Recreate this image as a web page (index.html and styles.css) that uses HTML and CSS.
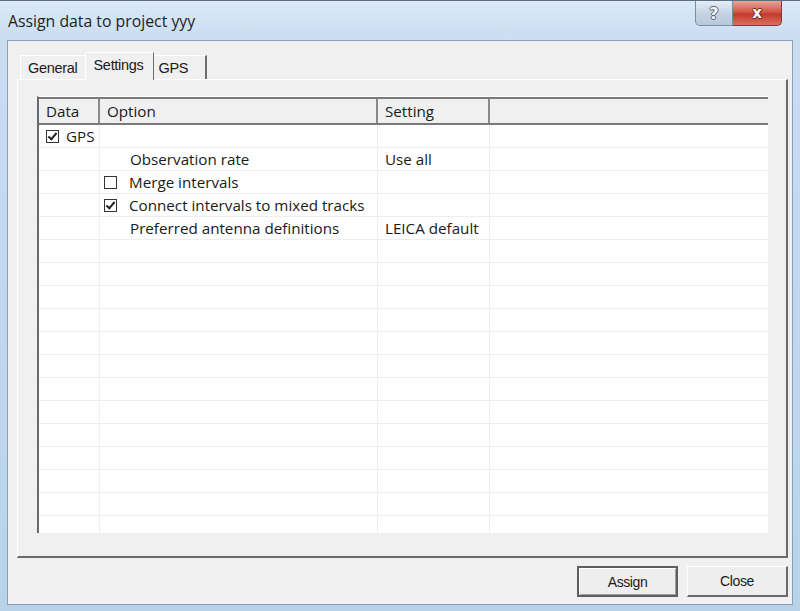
FILE: index.html
```html
<!DOCTYPE html>
<html>
<head>
<meta charset="utf-8">
<link rel="stylesheet" href="styles.css">
</head>
<body>
<div class="window">
  <div class="titlebar">
    <div class="title">Assign data to project yyy</div>
    <div class="caption-buttons">
      <div class="cap-btn help">?</div>
      <div class="cap-btn close">x</div>
    </div>
  </div>
  <div class="client">
    <div class="tabs">
      <div class="tab">General</div>
      <div class="tab active">Settings</div>
      <div class="tab last">GPS</div>
    </div>
    <div class="panel">
      <div class="grid">
        <div class="row head">
          <div class="c c1">Data</div>
          <div class="c c2">Option</div>
          <div class="c c3">Setting</div>
          <div class="c c4"></div>
        </div>
        <div class="row">
          <div class="c c1"><span class="cb checked"></span>GPS</div>
          <div class="c c2"></div>
          <div class="c c3"></div>
          <div class="c c4"></div>
        </div>
        <div class="row">
          <div class="c c1"></div>
          <div class="c c2 ind">Observation rate</div>
          <div class="c c3">Use all</div>
          <div class="c c4"></div>
        </div>
        <div class="row">
          <div class="c c1"></div>
          <div class="c c2"><span class="cb"></span>Merge intervals</div>
          <div class="c c3"></div>
          <div class="c c4"></div>
        </div>
        <div class="row">
          <div class="c c1"></div>
          <div class="c c2"><span class="cb checked"></span>Connect intervals to mixed tracks</div>
          <div class="c c3"></div>
          <div class="c c4"></div>
        </div>
        <div class="row">
          <div class="c c1"></div>
          <div class="c c2 ind">Preferred antenna definitions</div>
          <div class="c c3">LEICA default</div>
          <div class="c c4"></div>
        </div>
        <div class="row"><div class="c c1"></div><div class="c c2"></div><div class="c c3"></div><div class="c c4"></div></div>
        <div class="row"><div class="c c1"></div><div class="c c2"></div><div class="c c3"></div><div class="c c4"></div></div>
        <div class="row"><div class="c c1"></div><div class="c c2"></div><div class="c c3"></div><div class="c c4"></div></div>
        <div class="row"><div class="c c1"></div><div class="c c2"></div><div class="c c3"></div><div class="c c4"></div></div>
        <div class="row"><div class="c c1"></div><div class="c c2"></div><div class="c c3"></div><div class="c c4"></div></div>
        <div class="row"><div class="c c1"></div><div class="c c2"></div><div class="c c3"></div><div class="c c4"></div></div>
        <div class="row"><div class="c c1"></div><div class="c c2"></div><div class="c c3"></div><div class="c c4"></div></div>
        <div class="row"><div class="c c1"></div><div class="c c2"></div><div class="c c3"></div><div class="c c4"></div></div>
        <div class="row"><div class="c c1"></div><div class="c c2"></div><div class="c c3"></div><div class="c c4"></div></div>
        <div class="row"><div class="c c1"></div><div class="c c2"></div><div class="c c3"></div><div class="c c4"></div></div>
        <div class="row"><div class="c c1"></div><div class="c c2"></div><div class="c c3"></div><div class="c c4"></div></div>
        <div class="row"><div class="c c1"></div><div class="c c2"></div><div class="c c3"></div><div class="c c4"></div></div>
        <div class="row"><div class="c c1"></div><div class="c c2"></div><div class="c c3"></div><div class="c c4"></div></div>
      </div>
    </div>
    <div class="buttons">
      <div class="btn default">Assign</div>
      <div class="btn">Close</div>
    </div>
  </div>
</div>
</body>
</html>
```

FILE: styles.css
```css
html, body {
  margin: 0;
  padding: 0;
}
body {
  width: 800px;
  height: 611px;
  overflow: hidden;
  background: #bcd4ec;
}
.window {
  width: 800px;
  height: 611px;
  box-sizing: border-box;
  border-top: 1px solid #5a6f86;
  background: linear-gradient(to bottom, #dbe9f7 0px, #c9ddf1 40px, #b9d2ec 100%);
  display: flex;
  flex-direction: column;
}
.titlebar {
  height: 39px;
  display: flex;
  align-items: flex-start;
  box-sizing: border-box;
}
.title {
  flex: 1;
  padding: 9px 0 0 8px;
  font-family: "Open Sans", "Noto Sans", sans-serif;
  font-size: 15.8px;
  color: #1e1e1e;
}
.caption-buttons {
  display: flex;
  margin-right: 18px;
}
.cap-btn {
  height: 25px;
  box-sizing: border-box;
  display: flex;
  align-items: center;
  justify-content: center;
  font-family: "DejaVu Sans", sans-serif;
  font-weight: bold;
}
.help {
  width: 38px;
  border: 1px solid #7c8ea3;
  border-top: none;
  border-radius: 0 0 0 5px;
  background: linear-gradient(to bottom, #e6eef7, #c6d4e4 50%, #b7c8dc);
  color: #f4f6f8;
  font-size: 16px;
  text-shadow: 1px 0 0 #56667a, -1px 0 0 #56667a, 0 1px 0 #56667a, 0 -1px 0 #56667a;
}
.close {
  width: 49px;
  border: 1px solid #7b3a35;
  border-left: none;
  border-top: none;
  border-radius: 0 0 5px 0;
  background: linear-gradient(to bottom, #e7a59a, #d2574a 45%, #c43a2c 55%, #d9705f);
  color: #ffffff;
  font-size: 15px;
  text-shadow: 1px 0 0 #6a2a22, -1px 0 0 #6a2a22, 0 1px 0 #6a2a22, 0 -1px 0 #6a2a22;
}
.client {
  margin: 0 7px 0 7px;
  height: 565px;
  box-sizing: border-box;
  background: #f0f0f0;
  border: 1px solid #8aa0b8;
  display: flex;
  flex-direction: column;
  font-family: "Open Sans", "Noto Sans", sans-serif;
  font-size: 15.2px;
  color: #1a1a1a;
}
.tabs {
  display: flex;
  align-items: flex-end;
  margin: 10px 0 0 12px;
  height: 28px;
  font-family: "Liberation Sans", Arial, sans-serif;
  font-size: 14.5px;
  letter-spacing: -0.3px;
}
.tab {
  height: 24px;
  box-sizing: border-box;
  padding: 4px 7px 0 7px;
  border-top: 1px solid #ffffff;
  border-left: 1px solid #ffffff;
  background: #f0f0f0;
}
.tab.active {
  height: 28px;
  padding: 4px 9px 0 8px;
  margin-bottom: -1px;
  position: relative;
  z-index: 1;
  border-right: 1px solid #6e6e6e;
}
.tab.last {
  width: 53px;
  padding-left: 5px;
  border-left: none;
  border-right: 2px solid #6e6e6e;
}
.panel {
  margin: 0 4px 0 9px;
  height: 479px;
  box-sizing: border-box;
  border-top: 1px solid #ffffff;
  border-left: 1px solid #ffffff;
  border-right: 2px solid #6a6a6a;
  border-bottom: 2px solid #6a6a6a;
  padding: 16px 18px 0 19px;
}
.grid {
  height: 437px;
  box-sizing: border-box;
  background: #ffffff;
  border-left: 2px solid #6a6a6a;
  border-top: 1px solid #ffffff;
  overflow: hidden;
}
.row {
  display: flex;
  height: 23px;
  box-sizing: border-box;
  border-bottom: 1px solid #eeeeee;
}
.row.head {
  height: 28px;
  background: #f0f0f0;
  border-top: 2px solid #7a7a7a;
  border-bottom: 2px solid #7a7a7a;
}
.c {
  box-sizing: border-box;
  display: flex;
  align-items: center;
  white-space: nowrap;
  border-right: 1px solid #eeeeee;
}
.head .c {
  border-right: 2px solid #8a8a8a;
  padding-left: 7px;
}
.head .c4 {
  border-right: none;
}
.c1 { width: 61px; padding-left: 7px; }
.c2 { width: 278px; padding-left: 4px; }
.c3 { width: 112px; padding-left: 7px; }
.c4 { flex: 1; border-right: none; }
.c2.ind { padding-left: 30px; }
.cb {
  width: 13px;
  height: 13px;
  box-sizing: border-box;
  border: 1px solid #333333;
  background: #ffffff;
  margin-right: 12px;
  position: relative;
  flex: none;
}
.c1 .cb { margin-right: 7px; }
.cb.checked::after {
  content: "";
  position: absolute;
  left: 3px;
  top: 0px;
  width: 3px;
  height: 7px;
  border-right: 2px solid #222222;
  border-bottom: 2px solid #222222;
  transform: rotate(40deg);
}
.buttons {
  display: flex;
  justify-content: flex-end;
  gap: 9px;
  margin: 8px 4px 0 0;
  font-family: "Liberation Sans", Arial, sans-serif;
  font-size: 14px;
  letter-spacing: -0.4px;
}
.btn {
  width: 101px;
  height: 31px;
  box-sizing: border-box;
  display: flex;
  align-items: center;
  justify-content: center;
  background: #eeeeee;
  border-top: 1px solid #ffffff;
  border-left: 1px solid #ffffff;
  border-right: 2px solid #6a6a6a;
  border-bottom: 2px solid #6a6a6a;
}
.btn.default {
  border: 2px solid #5e5e5e;
  box-shadow: inset 1px 1px 0 #ffffff, inset -1px -1px 0 #a0a0a0;
}
```
